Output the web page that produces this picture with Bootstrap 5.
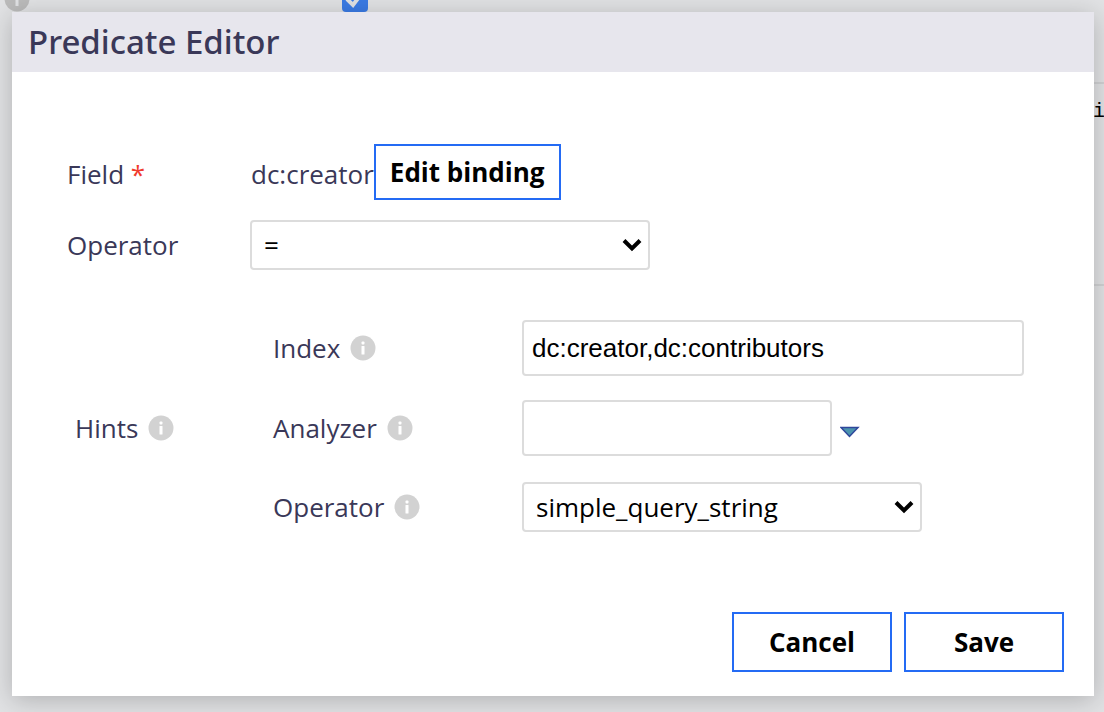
<!DOCTYPE html>
<html lang="en">
<head>
<meta charset="utf-8">
<meta name="viewport" content="width=device-width, initial-scale=1">
<title>Predicate Editor</title>
<link href="https://cdn.jsdelivr.net/npm/bootstrap@5.3.0/dist/css/bootstrap.min.css" rel="stylesheet">
<style>
  body { background: #e1e2e4; color: #3a3858; font: 26px/36px "Open Sans", sans-serif; min-height: 100vh; overflow-x: hidden; }
  .editor { position: relative; margin: 12px 10px 16px 12px; background: #fff; box-shadow: 0 4px 24px rgba(0,0,0,.22); }
  .editor-head { background: #e7e6ed; padding: 12px 16px; }
  .editor-head h1 { font-family: "Noto Sans", "Open Sans", sans-serif; font-size: 33px; line-height: 36px; font-weight: 500; color: #3a3858; margin: 0; }
  .editor-body { padding: 72px 30px 24px 55px; }
  .field-name { flex: 0 0 184px; }
  .select-name { flex: 0 0 183px; }
  .hint-name, .hint-title { gap: 10px; }
  .hint-name { flex: 0 0 249px; }
  .hint-title { flex: 0 0 198px; }
  .operator-row { margin-top: 20px; }
  .hints { margin-top: 50px; padding-left: 8px; }
  .hint-rows { gap: 24px; }
  .hint-select { padding-top: 2px; }
  .required { color: #f03a2d; }
  .info { width: 26px; height: 26px; flex: none; }
  .box { height: 56px; border: 2px solid #dcdcdc; border-radius: 4px; padding: 0 8px; color: #000; font: 26px/36px "Liberation Sans", Arial, sans-serif; }
  .pick { height: 50px; width: 400px; border: 2px solid #dcdcdc; border-radius: 4px; padding: 0 40px 0 12px; color: #000; font-size: 26px; line-height: 36px;
    background: #fff url("data:image/svg+xml,%3Csvg xmlns='http://www.w3.org/2000/svg' viewBox='0 0 20 14'%3E%3Cpath d='M2 2.500l8 8 8-8' fill='none' stroke='%23000' stroke-width='4'/%3E%3C/svg%3E") no-repeat right 6px center / 20px 14px; }
  .index-box { width: 502px; }
  .analyzer-box { width: 310px; }
  .outlined { border: 2px solid #246bf4; border-radius: 0; background: #fff; color: #000; font-size: 26px; line-height: 36px; font-weight: 700; padding: 8px 14px; }
  .action { width: 160px; padding: 10px 14px; }
  .actions { margin-top: 80px; gap: 12px; }
  /* Parts of the page underneath that stick out from behind the dialog */
  .under-info { position: absolute; left: 4px; top: -14px; }
  .under-check { position: absolute; left: 342px; top: -14px; width: 26px; height: 26px; }
  .under-panel { position: absolute; right: 0; top: 82px; width: 40px; height: 204px; border: 2px solid #d0d1d3; border-width: 2px 0; }
  .under-panel span { position: absolute; right: -1px; top: 10px; color: #000; font: 20px/36px "Liberation Mono", monospace; }
</style>
</head>
<body>
<svg class="d-none" xmlns="http://www.w3.org/2000/svg">
  <symbol id="info" viewBox="0 0 26 26">
    <circle cx="13" cy="13" r="12.500" fill="#d2d2d2"/>
    <rect x="11.500" y="6.500" width="3" height="3" rx="1" fill="#fff"/>
    <rect x="11.500" y="11" width="3" height="8.500" rx=".5" fill="#fff"/>
  </symbol>
</svg>

<div aria-hidden="true">
  <svg class="info under-info" viewBox="0 0 26 26"><circle cx="13" cy="13" r="12.500" fill="#bbb"/><path d="M13 11v9" stroke="#e1e2e4" stroke-width="3"/></svg>
  <svg class="under-check" viewBox="0 0 26 26"><rect width="26" height="26" rx="4" fill="#3b7be5"/><path d="M5 13l6 6 9-12" fill="none" stroke="#e1e2e4" stroke-width="4"/></svg>
  <div class="under-panel"><span>i</span></div>
</div>

<main class="editor" role="dialog" aria-labelledby="title">
  <header class="editor-head"><h1 id="title">Predicate Editor</h1></header>
  <form class="editor-body">
    <div class="d-flex align-items-center">
      <div class="field-name pt-1">Field <span class="required">*</span></div>
      <span class="pt-1">dc:creator</span>
      <button type="button" class="btn outlined">Edit binding</button>
    </div>
    <div class="operator-row d-flex align-items-center">
      <label class="select-name" for="operator">Operator</label>
      <select id="operator" class="form-select pick"><option>=</option></select>
    </div>

    <div class="hints d-flex align-items-center">
      <div class="hint-title d-flex align-items-center pt-1">Hints <svg class="info"><use href="#info"/></svg></div>
      <div class="hint-rows d-flex flex-column flex-grow-1">
        <div class="d-flex align-items-center">
          <label class="hint-name d-flex align-items-center" for="index">Index <svg class="info"><use href="#info"/></svg></label>
          <input id="index" class="form-control box index-box" type="text" value="dc:creator,dc:contributors">
        </div>
        <div class="d-flex align-items-center">
          <label class="hint-name d-flex align-items-center" for="analyzer">Analyzer <svg class="info"><use href="#info"/></svg></label>
          <input id="analyzer" class="form-control box analyzer-box" type="text">
          <button type="button" class="btn border-0 p-0 pt-2 ms-2 d-flex" aria-label="Show analyzers">
            <svg width="20" height="12" viewBox="0 0 20 12"><path d="M1 1.500h17L9.500 10.500z" fill="#4b93ae" stroke="#2f479b" stroke-width="1.500"/></svg>
          </button>
        </div>
        <div class="hint-select d-flex align-items-center">
          <label class="hint-name d-flex align-items-center" for="hint-operator">Operator <svg class="info"><use href="#info"/></svg></label>
          <select id="hint-operator" class="form-select pick"><option>simple_query_string</option></select>
        </div>
      </div>
    </div>

    <div class="actions d-flex justify-content-end">
      <button type="button" class="btn outlined action">Cancel</button>
      <button type="submit" class="btn outlined action">Save</button>
    </div>
  </form>
</main>
<script src="https://cdn.jsdelivr.net/npm/bootstrap@5.3.0/dist/js/bootstrap.bundle.min.js"></script>
</body>
</html>
